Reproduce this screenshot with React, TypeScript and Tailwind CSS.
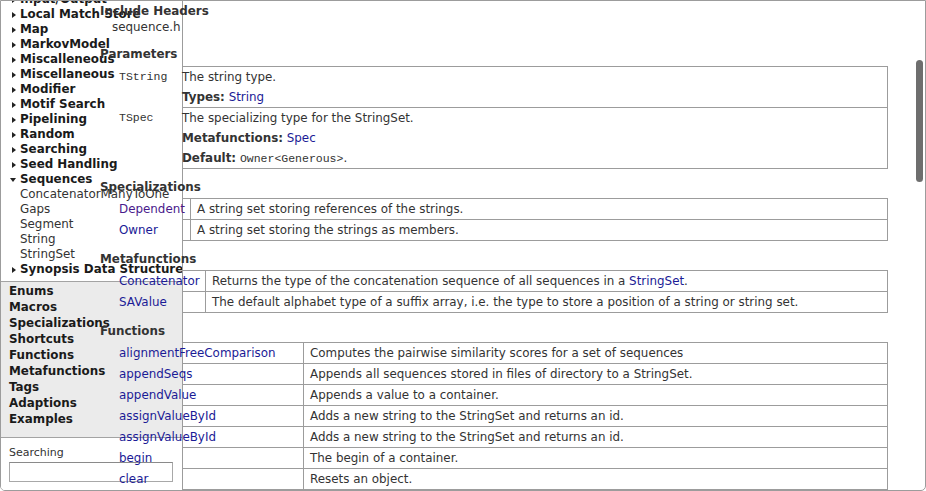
import React from "react";

const treeItems: { label: string; kind: "closed" | "open" | "leaf" }[] = [
  { label: "Input/Output", kind: "closed" },
  { label: "Local Match Store", kind: "closed" },
  { label: "Map", kind: "closed" },
  { label: "MarkovModel", kind: "closed" },
  { label: "Miscalleneous", kind: "closed" },
  { label: "Miscellaneous", kind: "closed" },
  { label: "Modifier", kind: "closed" },
  { label: "Motif Search", kind: "closed" },
  { label: "Pipelining", kind: "closed" },
  { label: "Random", kind: "closed" },
  { label: "Searching", kind: "closed" },
  { label: "Seed Handling", kind: "closed" },
  { label: "Sequences", kind: "open" },
  { label: "ConcatenatorManyToOne", kind: "leaf" },
  { label: "Gaps", kind: "leaf" },
  { label: "Segment", kind: "leaf" },
  { label: "String", kind: "leaf" },
  { label: "StringSet", kind: "leaf" },
  { label: "Synopsis Data Structure", kind: "closed" },
];

const categories = [
  "Enums",
  "Macros",
  "Specializations",
  "Shortcuts",
  "Functions",
  "Metafunctions",
  "Tags",
  "Adaptions",
  "Examples",
];

const functions: [string, string][] = [
  ["alignmentFreeComparison", "Computes the pairwise similarity scores for a set of sequences"],
  ["appendSeqs", "Appends all sequences stored in files of directory to a StringSet."],
  ["appendValue", "Appends a value to a container."],
  ["assignValueById", "Adds a new string to the StringSet and returns an id."],
  ["assignValueById", "Adds a new string to the StringSet and returns an id."],
  ["begin", "The begin of a container."],
  ["clear", "Resets an object."],
  ["concat", "Returns the concatenation sequence of all sequences in a StringSet."],
];

const Link: React.FC<{ children: React.ReactNode; visited?: boolean }> = ({ children, visited }) => (
  <a className={visited ? "text-[#4a1a8c]" : "text-[#1b1b96]"}>{children}</a>
);

const cell = "border border-[#9c9c9c] px-[6px] py-0 leading-[20px] align-top text-left";

function Sidebar() {
  return (
    <aside className="float-left -mr-[182px] flex h-[489px] w-[182px] flex-col border-r border-[#9c9c9c] bg-white text-[#1a1a1a]">
      <div className="h-[280px] overflow-hidden">
        <ul className="-mt-[9px] whitespace-nowrap">
          {treeItems.map((item, i) => (
            <li key={i} className={"flex items-center leading-[15px] " + (item.kind === "leaf" ? "font-normal text-[#333]" : "font-bold")}>
              <span className="flex w-[19px] shrink-0 justify-end pr-[4px]">
                {item.kind === "closed" && (
                  <span className="h-0 w-0 border-y-[3.5px] border-l-[4px] border-y-transparent border-l-[#222]" />
                )}
                {item.kind === "open" && (
                  <span className="h-0 w-0 border-x-[3.5px] border-t-[4px] border-x-transparent border-t-[#222]" />
                )}
              </span>
              {item.label}
            </li>
          ))}
        </ul>
      </div>
      <ul className="border-y border-[#a3a3a3] bg-[#ebebeb] pb-[10px] pl-[8px] pt-px font-bold">
        {categories.map((c) => (
          <li key={c} className="leading-[16px]">
            {c}
          </li>
        ))}
      </ul>
      <div className="pl-[8px] pt-[8px]">
        <div className="text-[11px] leading-[14px] text-[#333]">Searching</div>
        <input className="mt-[2px] h-[20px] w-[164px] border border-[#a8a8a8] border-t-[#8a8a8a] bg-white" />
      </div>
    </aside>
  );
}

function Heading({ children, first }: { children: React.ReactNode; first?: boolean }) {
  return <h2 className={"font-bold leading-[16px] " + (first ? "mt-[2px]" : "mt-[10px]")}>{children}</h2>;
}

export default function App() {
  return (
    <div className="relative h-[491px] w-[926px] overflow-hidden rounded-b-[5px] border border-[#9c9c9c] bg-white font-['DejaVu_Sans',Verdana,sans-serif] text-[11.9px] text-[#333]">
      <Sidebar />
      <main className="pl-[99px]">
        <Heading first>Include Headers</Heading>
        <div className="pl-[12px] leading-[16px]">sequence.h</div>

        <h2 className="mt-[11px] font-bold leading-[16px]">Parameters</h2>
        <table className="ml-[12px] mt-[4px] w-[776px] table-fixed border-collapse">
          <colgroup>
            <col className="w-[63px]" />
            <col />
          </colgroup>
          <tbody>
            <tr>
              <td className={cell + " font-['Liberation_Mono',monospace] text-[11.5px]"}>TString</td>
              <td className={cell}>
                <div>The string type.</div>
                <div>
                  <b>Types:</b> <Link>String</Link>
                </div>
              </td>
            </tr>
            <tr>
              <td className={cell + " font-['Liberation_Mono',monospace] text-[11.5px]"}>TSpec</td>
              <td className={cell}>
                <div>The specializing type for the StringSet.</div>
                <div>
                  <b>Metafunctions:</b> <Link>Spec</Link>
                </div>
                <div className="-mb-px">
                  <b>Default:</b>{" "}
                  <code className="font-['Liberation_Mono',monospace] text-[11.5px]">Owner&lt;Generous&gt;</code>.
                </div>
              </td>
            </tr>
          </tbody>
        </table>

        <Heading>Specializations</Heading>
        <table className="ml-[12px] mt-[3px] w-[776px] table-fixed border-collapse">
          <colgroup>
            <col className="w-[78px]" />
            <col />
          </colgroup>
          <tbody>
            <tr>
              <td className={cell}>
                <Link visited>Dependent</Link>
              </td>
              <td className={cell}>A string set storing references of the strings.</td>
            </tr>
            <tr>
              <td className={cell}>
                <Link>Owner</Link>
              </td>
              <td className={cell}>A string set storing the strings as members.</td>
            </tr>
          </tbody>
        </table>

        <Heading>Metafunctions</Heading>
        <table className="ml-[12px] mt-[3px] w-[776px] table-fixed border-collapse">
          <colgroup>
            <col className="w-[93px]" />
            <col />
          </colgroup>
          <tbody>
            <tr>
              <td className={cell}>
                <Link>Concatenator</Link>
              </td>
              <td className={cell}>
                Returns the type of the concatenation sequence of all sequences in a <Link>StringSet</Link>.
              </td>
            </tr>
            <tr>
              <td className={cell}>
                <Link>SAValue</Link>
              </td>
              <td className={cell}>
                The default alphabet type of a suffix array, i.e. the type to store a position of a string or string set.
              </td>
            </tr>
          </tbody>
        </table>

        <Heading>Functions</Heading>
        <table className="ml-[12px] mt-[3px] w-[776px] table-fixed border-collapse">
          <colgroup>
            <col className="w-[191px]" />
            <col />
          </colgroup>
          <tbody>
            {functions.map(([name, desc], i) => (
              <tr key={i}>
                <td className={cell}>
                  <Link>{name}</Link>
                </td>
                <td className={cell}>{desc}</td>
              </tr>
            ))}
          </tbody>
        </table>
      </main>
      <div className="absolute left-[915px] top-[59px] h-[122px] w-[7px] rounded-full bg-[#6e6e6e]" />
    </div>
  );
}
